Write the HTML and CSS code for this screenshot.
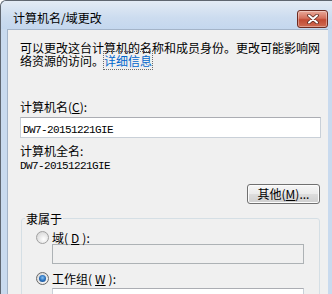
FILE: index.html
```html
<!DOCTYPE html>
<html>
<head>
	<title>计算机名/域更改</title>
	<meta charset="UTF-8">
	<link rel="stylesheet" href="styles.css">
</head>
<body>
	<div class="window">
		<div class="titlebar">
			<span class="title">计算机名/域更改</span>
			<span class="close">
				<svg width="14" height="10" viewBox="0 0 14 10">
					<path d="M3 1.5 L11 8.5 M11 1.5 L3 8.5" stroke="#5a2a22" stroke-width="3.6" stroke-linecap="round"/>
					<path d="M3 1.5 L11 8.5 M11 1.5 L3 8.5" stroke="#fff" stroke-width="2" stroke-linecap="round"/>
				</svg>
			</span>
		</div>
		<div class="client">
			<p class="intro">可以更改这台计算机的名称和成员身份。更改可能影响网<br>络资源的访问。<a class="link" href="#">详细信息</a></p>
			<div class="label label-name">计算机名(<u>C</u>):</div>
			<div class="textbox"><span class="mono">DW7-20151221GIE</span></div>
			<div class="label label-full">计算机全名:</div>
			<div class="mono value">DW7-20151221GIE</div>
			<div class="btn-row"><span class="button">其他(<u>M</u>)...</span></div>
			<fieldset class="group">
				<legend>隶属于</legend>
				<div class="radio-row"><span class="radio"></span>域(<u>D</u>):</div>
				<div class="textbox disabled"></div>
				<div class="radio-row row-wg"><span class="radio checked"></span>工作组(<u>W</u>):</div>
				<div class="textbox wg"><span class="mono">WORKGROUP</span></div>
			</fieldset>
		</div>
	</div>
</body>
</html>
```

FILE: styles.css
```css
*{
	margin: 0;
	padding: 0;
	box-sizing: border-box;
}
body{
	width: 332px;
	height: 294px;
	overflow: hidden;
	background: #fff;
	font-family: "Noto Sans CJK SC", "Liberation Sans", sans-serif;
	font-size: 12px;
	line-height: 13px;
	color: #000;
}
.window{
	width: 332px;
	height: 294px;
	overflow: hidden;
	background: #c9daee;
	border-left: 1px solid #5f6670;
	border-top: 1px solid #5f6670;
	border-radius: 6px 0 0 0;
	padding: 0 4px 0 6px;
	display: flex;
	flex-direction: column;
}
.titlebar{
	height: 28px;
	flex-shrink: 0;
	margin-left: -6px;
	margin-right: -4px;
	padding: 0 4px 0 12px;
	background: linear-gradient(#e3ebf5, #ccdcef 60%, #c4d7ee);
	border-radius: 5px 0 0 0;
	display: flex;
	justify-content: space-between;
	align-items: flex-start;
}
.title{
	margin-top: 10px;
	line-height: 13px;
}
.close{
	margin-top: 9px;
	width: 31px;
	height: 18px;
	border: 1px solid #6d2a20;
	border-radius: 3px;
	background: linear-gradient(#e9a99a, #d5705c 45%, #c24a33 55%, #cf6b52);
	box-shadow: inset 0 0 0 1px rgba(255,255,255,.35);
	display: flex;
	align-items: center;
	justify-content: center;
}
.client{
	flex: 1;
	background: #f0f0f0;
	border-left: 1px solid #a4b4c8;
	border-top: 1px solid #a4b4c8;
	padding: 11px 7px 0 12px;
}
.intro{
	line-height: 13px;
}
.link{
	color: #0066cc;
	text-decoration: none;
	outline: 1px dotted #6b6b6b;
}
.label-name{
	margin-top: 33px;
}
.textbox{
	height: 21px;
	margin-top: 4px;
	background: #fff;
	border: 1px solid #c9d0d8;
	border-top-color: #abadb3;
	padding: 3px 2px 0;
}
.mono{
	font-family: "Liberation Mono", "DejaVu Sans Mono", monospace;
	font-size: 11px;
	letter-spacing: -0.6px;
}
.label-full{
	margin-top: 6px;
}
.value{
	margin-top: 3px;
	line-height: 13px;
}
.btn-row{
	margin-top: 11px;
	display: flex;
	justify-content: flex-end;
	padding-right: 1px;
}
.button{
	width: 73px;
	height: 20px;
	border: 1px solid #707070;
	border-radius: 3px;
	background: linear-gradient(#f6f6f6, #ebebeb 50%, #dddddd 50%, #cfcfcf);
	box-shadow: inset 0 0 0 1px #fcfcfc;
	line-height: 18px;
	text-align: center;
}
.group{
	margin: 8px 1px 0 1px;
	border: 1px solid #d5dfe5;
	border-radius: 3px;
	padding: 6px 15px 0 14px;
	height: 120px;
}
.group legend{
	margin-left: -11px;
	padding: 0 1px;
	line-height: 13px;
}
.radio-row{
	display: flex;
	align-items: center;
	gap: 3px;
	height: 13px;
}
.radio{
	width: 13px;
	height: 13px;
	border-radius: 50%;
	border: 1px solid #a0a0a0;
	background: radial-gradient(circle at 60% 65%, #ffffff, #e4e4e4 55%, #cfcfcf);
	display: flex;
	align-items: center;
	justify-content: center;
}
.radio.checked{
	border-color: #6a6a6a;
}
.radio.checked::after{
	content: "";
	width: 7px;
	height: 7px;
	border-radius: 50%;
	background: radial-gradient(circle at 50% 40%, #8ac2f0, #2a72bf 50%, #153f7a);
}
.textbox.disabled{
	margin: 0 0 0 16px;
	height: 20px;
	background: #f0f0f0;
	border: 1px solid #adb2b5;
}
.row-wg{
	margin-top: 8px;
}
.textbox.wg{
	margin: 3px 0 0 16px;
}
```
